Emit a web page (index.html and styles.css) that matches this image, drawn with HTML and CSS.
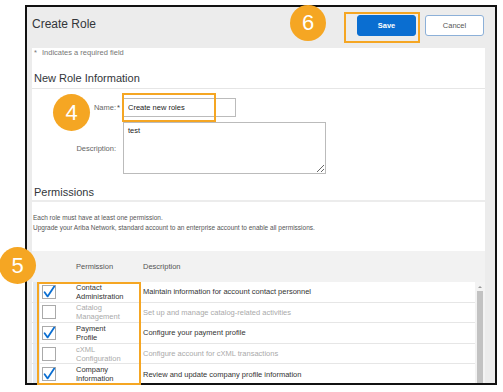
FILE: index.html
```html
<!DOCTYPE html>
<html lang="en">
<head>
    <meta charset="UTF-8">
    <meta name="viewport" content="width=device-width, initial-scale=1.0">
    <title>Create Role</title>
    <link rel="stylesheet" href="styles.css">
</head>
<body>

<div class="page">
    <div class="frame">
        <div class="page-head">
            <h1 class="title">Create Role</h1>
            <div class="actions">
                <button class="btn btn-primary">Save</button>
                <button class="btn btn-secondary">Cancel</button>
            </div>
        </div>

        <div class="panel panel-main">
            <p class="required-note"><span class="star">*</span>Indicates a required field</p>
            <h2 class="section-title section-title-line">New Role Information</h2>
            <div class="form-grid">
                <label class="form-label" for="roleName">Name:</label>
                <span class="req">*</span>
                <input type="text" id="roleName" class="input-name" value="Create new roles">

                <label class="form-label" for="roleDesc">Description:</label>
                <span></span>
                <textarea id="roleDesc" class="input-desc">test</textarea>
            </div>
            <h2 class="section-title section-title-perm">Permissions</h2>
        </div>

        <div class="panel panel-help">
            <p>Each role must have at least one permission.</p>
            <p>Upgrade your Ariba Network, standard account to an enterprise account to enable all permissions.</p>
        </div>

        <div class="perm-head">
            <span></span>
            <span>Permission</span>
            <span>Description</span>
        </div>

        <div class="perm-table">
            <div class="perm-rows">
                <div class="perm-row">
                    <div class="perm-check"><span class="checkbox checked"><svg viewBox="0 0 14 14"><path d="M2.6 7.2 L5.6 11.4 L12.2 1.6"/></svg></span></div>
                    <div class="perm-name">Contact<br>Administration</div>
                    <div class="perm-desc">Maintain information for account contact personnel</div>
                </div>
                <div class="perm-row disabled">
                    <div class="perm-check"><span class="checkbox"></span></div>
                    <div class="perm-name">Catalog<br>Management</div>
                    <div class="perm-desc">Set up and manage catalog-related activities</div>
                </div>
                <div class="perm-row">
                    <div class="perm-check"><span class="checkbox checked"><svg viewBox="0 0 14 14"><path d="M2.6 7.2 L5.6 11.4 L12.2 1.6"/></svg></span></div>
                    <div class="perm-name">Payment<br>Profile</div>
                    <div class="perm-desc">Configure your payment profile</div>
                </div>
                <div class="perm-row disabled">
                    <div class="perm-check"><span class="checkbox"></span></div>
                    <div class="perm-name">cXML<br>Configuration</div>
                    <div class="perm-desc">Configure account for cXML transactions</div>
                </div>
                <div class="perm-row">
                    <div class="perm-check"><span class="checkbox checked"><svg viewBox="0 0 14 14"><path d="M2.6 7.2 L5.6 11.4 L12.2 1.6"/></svg></span></div>
                    <div class="perm-name">Company<br>Information</div>
                    <div class="perm-desc">Review and update company profile information</div>
                </div>
            </div>
            <div class="scrollbar">
                <span class="scroll-up"></span>
                <span class="scroll-thumb"></span>
            </div>
        </div>
    </div>

    <!-- marcações do tutorial -->
    <div class="mark mark-name"></div>
    <div class="mark mark-save"></div>
    <div class="mark mark-perms"></div>
    <div class="step step-4">4</div>
    <div class="step step-5">5</div>
    <div class="step step-6">6</div>
</div>

</body>
</html>
```

FILE: styles.css
```css
body {
    margin: 0;
    background-color: #fff;
    font-family: "Liberation Sans", Arial, sans-serif;
    color: #333;
}

.page {
    position: relative;
    width: 503px;
    height: 392px;
    overflow: hidden;
}

.frame {
    margin: 5px 0 0 25px;
    width: 472px;
    height: 380px;
    box-sizing: border-box;
    border: 2px solid #111;
    background-color: #ececec;
    overflow: hidden;
}

/* cabeçalho */
.page-head {
    display: flex;
    justify-content: space-between;
    align-items: flex-start;
    height: 41px;
    box-sizing: border-box;
    padding: 8px 11px 0 5px;
}

.title {
    margin: 1px 0 0 0;
    font-size: 12px;
    line-height: 16px;
    font-weight: normal;
    color: #32363a;
}

.actions {
    display: flex;
    gap: 9px;
}

.btn {
    width: 59px;
    height: 21px;
    font-family: inherit;
    font-size: 7.5px;
    border-radius: 3px;
    padding: 0;
    cursor: pointer;
}

.btn-primary {
    background-color: #0a6ed1;
    border: 1px solid #0a6ed1;
    color: #fff;
    font-weight: bold;
}

.btn-secondary {
    background-color: #fff;
    border: 1px solid #8cb0d8;
    color: #555;
}

/* painéis brancos */
.panel {
    margin: 0 10px 0 5px;
    background-color: #fff;
}

.panel-main {
    padding-bottom: 1px;
}

.required-note {
    margin: 0;
    padding-left: 2px;
    font-size: 7.5px;
    line-height: 10px;
    color: #777;
}

.star {
    display: inline-block;
    width: 8px;
}

.section-title {
    margin: 0;
    padding-left: 2px;
    font-size: 11px;
    line-height: 14px;
    font-weight: normal;
    color: #32363a;
}

.section-title-line {
    margin-top: 13px;
    padding-bottom: 3px;
    border-bottom: 1px solid #e6e6e6;
}

.section-title-perm {
    margin-top: 11px;
}

.form-grid {
    display: grid;
    grid-template-columns: 84px 7px auto;
    row-gap: 5px;
    align-items: center;
    justify-items: start;
    padding-top: 9px;
}

.form-label {
    justify-self: end;
    font-size: 7.5px;
    color: #666;
}

.req {
    font-size: 7.5px;
    color: #444;
    padding-left: 1px;
}

.input-name {
    width: 113px;
    height: 19px;
    box-sizing: border-box;
    border: 1px solid #bbb;
    padding: 0 4px;
    font-family: inherit;
    font-size: 7.5px;
    color: #222;
}

.input-desc {
    width: 203px;
    height: 52px;
    box-sizing: border-box;
    border: 1px solid #bbb;
    padding: 3px 4px;
    margin: 0;
    font-family: inherit;
    font-size: 7.5px;
    color: #222;
}

.panel-help {
    margin-top: 2px;
    height: 49px;
    box-sizing: border-box;
    padding: 11px 0 0 1px;
}

.panel-help p {
    margin: 0;
    font-size: 6.5px;
    line-height: 10px;
    color: #555;
}

/* tabela de permissões */
.perm-head {
    display: grid;
    grid-template-columns: 44px 67px 1fr;
    align-items: center;
    height: 31px;
    margin: 0 10px 0 5px;
    background-color: #f2f2f2;
    font-size: 7.5px;
    color: #555;
}

.perm-table {
    display: flex;
    margin: 0 10px 0 5px;
}

.perm-rows {
    flex: 1;
    background-color: #fff;
}

.perm-row {
    display: grid;
    grid-template-columns: 44px 67px 1fr;
    align-items: center;
    height: 20.6px;
    box-sizing: border-box;
    border-bottom: 1px solid #e6e6e6;
    font-size: 7.5px;
    color: #333;
}

.perm-row.disabled {
    color: #aaa;
}

.perm-check {
    height: 100%;
    display: flex;
    align-items: center;
    background: linear-gradient(90deg, #fff 1px, #e3eaf2 1px 8px, #fff 8px);
}

.checkbox {
    display: block;
    width: 14px;
    height: 14px;
    box-sizing: border-box;
    margin-left: 10px;
    border: 1px solid #aaa;
    background-color: #fff;
}

.checkbox svg {
    display: block;
    width: 14px;
    height: 14px;
    margin: -1px 0 0 -1px;
    overflow: visible;
}

.checkbox svg path {
    fill: none;
    stroke: #0a6ed1;
    stroke-width: 1.8;
    stroke-linecap: round;
    stroke-linejoin: round;
}

.perm-name {
    line-height: 9px;
}

.scrollbar {
    width: 10px;
    background-color: #f3f3f3;
    display: flex;
    flex-direction: column;
    align-items: center;
}

.scroll-up {
    margin-top: 4px;
    width: 0;
    height: 0;
    border-left: 2px solid transparent;
    border-right: 2px solid transparent;
    border-bottom: 2px solid #999;
}

.scroll-thumb {
    margin-top: 3px;
    width: 6px;
    height: 100px;
    background-color: #c2c2c2;
}

/* marcações laranja */
.mark {
    position: absolute;
    box-sizing: border-box;
    border: 2px solid #f5a623;
}

.mark-name {
    left: 122px;
    top: 93px;
    width: 94px;
    height: 29px;
}

.mark-save {
    left: 344px;
    top: 12px;
    width: 76px;
    height: 31px;
}

.mark-perms {
    left: 37px;
    top: 282px;
    width: 104px;
    height: 103px;
}

.step {
    position: absolute;
    width: 37px;
    height: 37px;
    border-radius: 50%;
    background-color: #f5a623;
    color: #fff;
    font-size: 22px;
    line-height: 37px;
    text-align: center;
}

.step-4 {
    left: 53px;
    top: 94px;
}

.step-5 {
    left: -1px;
    top: 247px;
}

.step-6 {
    left: 290px;
    top: 5px;
    width: 36px;
    height: 36px;
    line-height: 36px;
}
```
